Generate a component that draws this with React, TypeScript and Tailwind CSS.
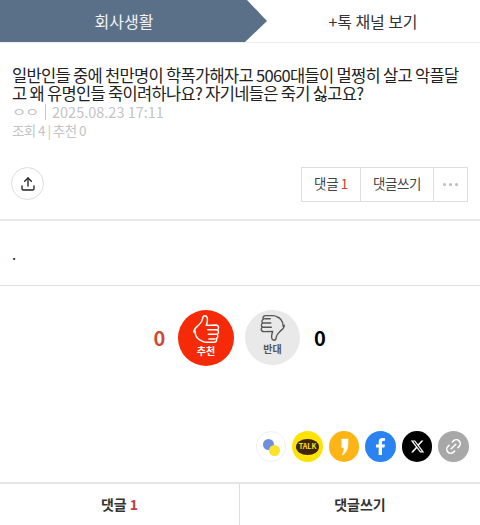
import { Upload, Link2 } from "lucide-react";
import { FaFacebookF } from "react-icons/fa";
import { FaXTwitter } from "react-icons/fa6";

const font = "font-['Noto_Sans_CJK_KR','Noto_Sans',sans-serif]";

function ThumbIcon({ className }: { className: string }) {
  return (
    <svg viewBox="0 0 24 24" className={className} fill="none" stroke="currentColor" strokeWidth="1.2" strokeLinejoin="round" strokeLinecap="round">
      <path d="M1.500 14c0-2.700 2.200-4 3.900-5.500C7.200 6.900 8.500 5.200 8.800 3c.1-1.200.7-2.300 1.800-2.300 1.500 0 2.200 1.700 2.200 3.500 0 1.600-.6 3.200-1 4.400l7.700-.3c1.600 0 2.500 1.100 2.500 2.200 0 .9-.4 1.500-1.100 1.800.7.400 1 1.100 1 1.800 0 .9-.5 1.500-1.200 1.800.4.400.7 1 .7 1.600 0 .9-.6 1.500-1.300 1.800.2.300.3.700.3 1.200 0 1.300-1.100 2.100-2.400 2.100h-6.500c-1.600 0-2.700-.5-3.700-1.300-1.200-.2-5.300-2.300-5.300-8.300Z" />
      <path d="M13 12.200h7.500M13.500 16h6.500M14 19.800h5" />
    </svg>
  );
}

export default function App() {
  return (
    <div className={`w-[480px] h-[525px] bg-white flex flex-col overflow-hidden ${font}`}>
      {/* 상단 탭 */}
      <header className="h-[43px] flex border-b border-[#eeeeee] shrink-0">
        <div className="w-[267px] h-[42px] bg-[#5a7089] [clip-path:polygon(0_0,247px_0,100%_50%,245px_100%,0_100%)] flex items-center justify-center pr-[19px] text-[16px] text-[#f2f4f6]">
          회사생활
        </div>
        <div className="flex-1 flex items-center justify-center pr-[1px] text-[16px] tracking-[-0.1px] text-[#333333]">+톡 채널 보기</div>
      </header>

      {/* 글 제목 */}
      <section className="px-3 pt-[23px] h-[108px] shrink-0">
        <h1 className="text-[16.500px] leading-[18px] tracking-[-0.68px] text-[#222222] font-normal whitespace-nowrap">
          일반인들 중에 천만명이 학폭가해자고 5060대들이 멀쩡히 살고 악플달
          <br />
          고 왜 유명인들 죽이려하나요? 자기네들은 죽기 싫고요?
        </h1>
        <p className="text-[14.500px] leading-[19px] text-[#c4c4c4] flex">
          <span className="w-[33px] text-[12px] tracking-[-1px] scale-x-[1.3] origin-left">ㅇㅇ</span>
          <span className="border-l border-[#cccccc] pl-[6px] h-[16px] mt-[2px] leading-[15px]">2025.08.23 17:11</span>
        </p>
        <p className="text-[13.500px] leading-[18px] text-[#c4c4c4] tracking-[-0.6px]">조회 4 | 추천 0</p>
      </section>

      {/* 버튼 줄 */}
      <div className="h-[70px] pl-[11px] pr-[12px] pt-[16px] flex justify-between border-b-2 border-[#e8e8e8] shrink-0">
        <div className="w-[33px] h-[33px] rounded-full border border-[#dddddd] flex items-center justify-center text-[#222222]">
          <Upload size={16} strokeWidth={2} />
        </div>
        <div className="flex h-[35px] border border-[#dddddd] text-[13.500px] text-[#444444] tracking-[-0.4px]">
          <span className="w-[59px] pb-[2px] flex items-center justify-center border-r border-[#dddddd]">
            댓글&nbsp;<span className="text-[#c0413b]">1</span>
          </span>
          <span className="w-[73px] pb-[2px] flex items-center justify-center border-r border-[#dddddd]">댓글쓰기</span>
          <span className="w-[33px] flex items-center justify-center gap-[3px]">
            <i className="w-[3px] h-[3px] rounded-full bg-[#bbbbbb]" />
            <i className="w-[3px] h-[3px] rounded-full bg-[#bbbbbb]" />
            <i className="w-[3px] h-[3px] rounded-full bg-[#bbbbbb]" />
          </span>
        </div>
      </div>

      {/* 본문 */}
      <div className="h-[65px] px-3 pt-[22px] text-[15px] leading-[22px] text-[#222222] border-b border-[#dddddd] shrink-0">.</div>

      {/* 추천 */}
      <div className="h-[79px] pt-[24px] pr-[7px] flex justify-center items-start shrink-0">
        <span className="w-[48px] h-[56px] flex items-center justify-center pl-[9px] text-[20px] font-bold text-[#cf4a36]">0</span>
        <div className="w-[56px] h-[56px] rounded-full bg-[#f72a07] flex flex-col items-center text-white ml-[-1px]">
          <ThumbIcon className="w-[29px] h-[29px] mt-[5px]" />
          <span className="text-[10px] leading-[13px] font-bold">추천</span>
        </div>
        <div className="w-[55px] h-[55px] rounded-full bg-[#e9e9e9] flex flex-col items-center text-[#555555] ml-[11px]">
          <ThumbIcon className="w-[27px] h-[27px] mt-[4px] [transform:scale(-1,-1)]" />
          <span className="text-[10px] leading-[13px] font-bold mt-[1px]">반대</span>
        </div>
        <span className="w-[42px] h-[56px] flex items-center justify-center pr-[2px] text-[20px] font-bold text-black">0</span>
      </div>

      {/* 공유 아이콘 */}
      <div className="pt-[66px] h-[117px] pr-[11px] flex justify-end items-start gap-[6px] shrink-0">
        <span className="relative w-[30px] h-[31px] rounded-full border border-[#f0f0f0]">
          <i className="absolute left-[6px] top-[7px] w-[11px] h-[11px] rounded-full bg-[#6f8fdc]" />
          <i className="absolute left-[12px] top-[13px] w-[11px] h-[11px] rounded-full bg-[#fbe32c]" />
        </span>
        <span className="w-[31px] h-[31px] rounded-full bg-[#fde305] flex items-center justify-center">
          <span className="w-[23px] h-[16px] rounded-[50%] bg-[#3f2415] text-[#fde305] text-[7px] font-bold flex items-center justify-center">TALK</span>
        </span>
        <span className="w-[30px] h-[31px] rounded-full bg-[#fdb515] flex items-center justify-center">
          <svg viewBox="0 0 12 22" className="w-[9px] h-[18px]" fill="white"><path d="M2 0h9v8c0 5-2 10-7 14l-1.500-1c1.800-2.500 2.500-5 2.500-9H2Z" /></svg>
        </span>
        <span className="w-[31px] h-[31px] rounded-full bg-[#2a83f0] flex items-center justify-center text-white">
          <FaFacebookF size={17} />
        </span>
        <span className="w-[30px] h-[31px] rounded-full bg-black flex items-center justify-center text-white">
          <FaXTwitter size={15} />
        </span>
        <span className="w-[31px] h-[31px] rounded-full bg-[#a8a8a8] flex items-center justify-center text-white">
          <Link2 size={19} className="-rotate-45" />
        </span>
      </div>

      {/* 하단 바 */}
      <footer className="flex flex-1 border-t-2 border-[#e5e5e5] text-[14px] font-bold text-[#333333]">
        <div className="w-[240px] flex items-center justify-center border-r border-[#dddddd]">
          댓글&nbsp;<span className="text-[#c0413b]">1</span>
        </div>
        <div className="flex-1 flex items-center justify-center">댓글쓰기</div>
      </footer>
    </div>
  );
}
